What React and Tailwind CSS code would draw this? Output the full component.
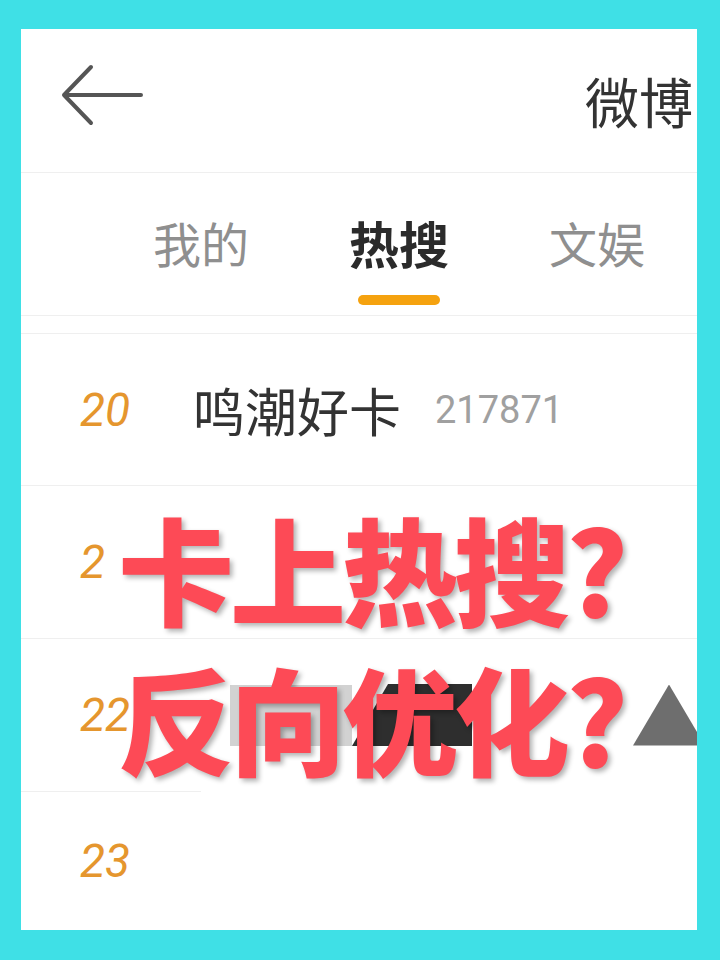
import React from "react";

const cjk = "font-['Noto_Sans_CJK_SC','Noto_Sans',sans-serif]";

function Row({ num, children, className = "" }) {
  return (
    <div className={`flex items-center pl-[59px] border-b border-[#efefef] ${className}`}>
      <div className="w-[113px] shrink-0 font-['Roboto',sans-serif] font-normal italic text-[46px] leading-none text-[#e5962e]">
        {num}
      </div>
      {children}
    </div>
  );
}

export default function App() {
  return (
    <div className="w-[720px] h-[960px] bg-[#3fe0e6] pt-[29px] pl-[21px] overflow-hidden">
      <div className={`relative w-[676px] h-[901px] bg-white overflow-hidden flex flex-col ${cjk}`}>
        {/* header */}
        <div className="h-[144px] shrink-0 border-b border-[#efefef] flex items-center justify-between pl-[39px] pr-[4px]">
          <svg width="84" height="66" viewBox="0 0 84 66" className="-mt-[8px]" fill="none">
            <path d="M81 31 H4 M31 3 L4 31 L31 59" stroke="#555" strokeWidth="4" strokeLinecap="round" strokeLinejoin="round" />
          </svg>
          <div className="text-[54px] leading-none text-[#333]">微博</div>
        </div>
        {/* tabs */}
        <div className="h-[142px] shrink-0 flex items-start pl-[132px] gap-[100px] pt-[45px]">
          <div className="text-[48px] leading-[48px] text-[#8f8f8f]">我的</div>
          <div className="flex flex-col items-center">
            <div className="text-[50px] leading-[48px] font-bold text-[#2b2b2b]">热搜</div>
            <div className="mt-[29px] w-[82px] h-[10px] rounded-full bg-[#f5a20f]" />
          </div>
          <div className="text-[48px] leading-[48px] text-[#8f8f8f]">文娱</div>
        </div>
        <div className="h-[19px] shrink-0 border-y border-[#efefef]" />
        {/* rows */}
        <Row num="20" className="h-[152px] shrink-0">
          <div className="text-[52px] leading-none text-[#333]">鸣潮好卡</div>
          <div className="ml-[34px] font-['Roboto',sans-serif] text-[38px] leading-none text-[#a0a0a0]">217871</div>
        </Row>
        <Row num="2" className="h-[153px] shrink-0" />
        <Row num="22" className="h-[152px] shrink-0 border-b-0">
          <div className="ml-[37px] w-[122px] h-[61px] bg-[#d2d2d2]" />
          <div className="w-[120px] h-[62px] bg-[#2e2e2e] [clip-path:polygon(0_100%,30%_0,100%_0,100%_100%)]" />
          <div className="ml-auto -mr-[8px] w-[72px] h-[61px] bg-[#6e6e6e] [clip-path:polygon(50%_0,100%_100%,0_100%)]" />
        </Row>
        <div className="h-px w-[180px] bg-[#efefef]" />
        <Row num="23" className="flex-1 border-b-0" />

        {/* overlay caption */}
        <div className="absolute left-[97px] top-[462px] text-[116px] leading-[150px] font-black tracking-[-4px] text-[#fd4a56] [text-shadow:3px_3px_5px_rgba(0,0,0,0.3)] whitespace-nowrap">
          <div>卡上热搜?</div>
          <div>反向优化?</div>
        </div>
      </div>
    </div>
  );
}
